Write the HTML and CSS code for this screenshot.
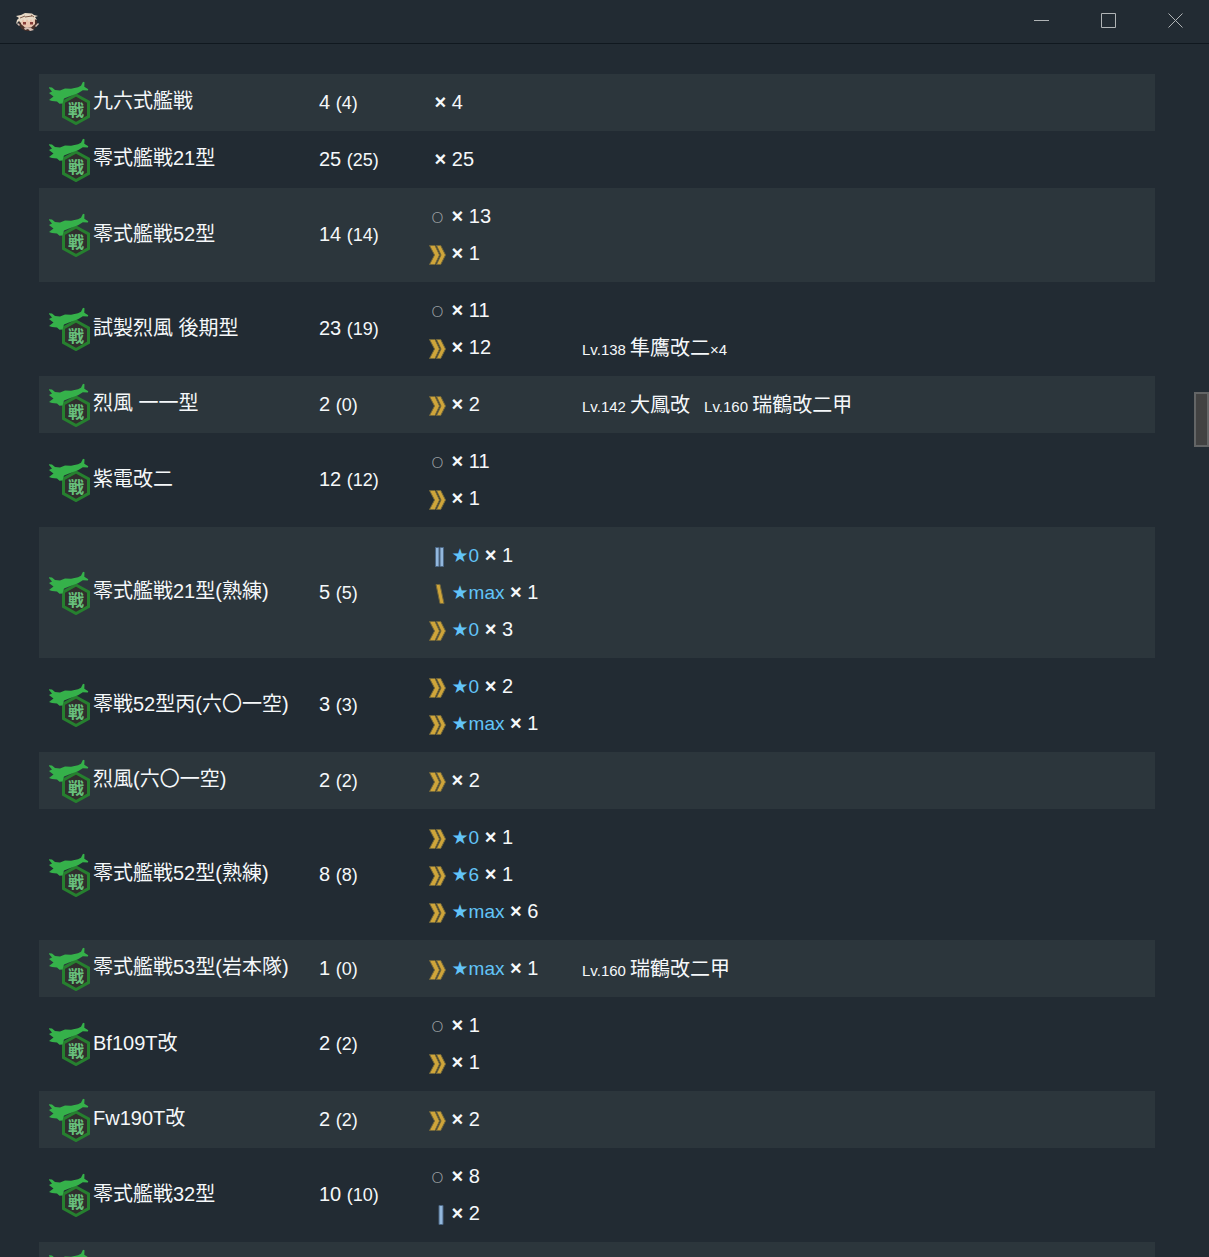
FILE: index.html
```
<!DOCTYPE html>
<html lang="ja">
<head>
    <meta charset="UTF-8">
    <meta name="viewport" content="width=device-width, initial-scale=1.0">
    <title>Equipment</title>
    <link rel="stylesheet" href="styles.css">
</head>
<body>
    <svg class="sprites" aria-hidden="true">
        <symbol id="fighter" viewBox="0 0 44 44">
            <path d="M27 14 39.500 21v14.500L27 42.500 14.500 35.500V21z" fill="#302f2d" stroke="#26802f" stroke-width="3"/>
            <text x="27" y="35" class="fighter-mark">戦</text>
            <path d="M-.7 6.300 3 6.500 6 9l5 .5 5-2 6 .3 7-1.500 3-1.500 2-4 1.500.5-.2 4.500 4 2.500-.5 1.300-5-.3-4.800 3L20 15.500l-5 2-1.500 5-3 .2L8 20.500 3 20l-3-1 4.500-3.500-2-1.500L0 12l3-1.500z" fill="#35b14a"/>
        </symbol>
        <symbol id="p7" viewBox="0 0 17 20">
            <path d="M.5.5H6l4.500 9.500L6 19.500H.5l5-9.500zM7.500.5h4.200l4.800 9.500-4.800 9.500H7.500l4.500-9.500z" class="gold"/>
        </symbol>
        <symbol id="p4" viewBox="0 0 17 20"><path d="M7 .5h4l4 19h-4z" class="gold"/></symbol>
        <symbol id="p2" viewBox="0 0 17 20"><path d="M6.500.5h3.500v19H6.500zM11 .5h3.500v19H11z" class="blue"/></symbol>
        <symbol id="p1" viewBox="0 0 17 20"><path d="M10 .5h4v19h-4z" class="blue"/></symbol>
    </svg>

    <header class="titlebar">
        <svg class="logo" viewBox="0 0 24 20" aria-hidden="true">
            <ellipse cx="12" cy="11" rx="9" ry="8" fill="#4a3029"/>
            <path d="M5 7h14v5l-4 3.500H9L5 12z" fill="#e9c3ae"/>
            <path d="M0 4l5-1 4-2 7 .5 2 1.500 4 1-3 1 2 3-3-1-1 3-2-3-2 3-2-3-2 3-2-3-2 4-2-2-3 3 1-4H1l2-2z" fill="#e8dac7"/>
            <path d="M4 6l5-2M9 5l7-1M18 5l-3-2" stroke="#7c5948" stroke-width="1" fill="none"/>
            <path d="M7 10h3v2.500H7zM14 10h3v2.500h-3z" fill="#873c38"/>
            <path d="M8 16l3-1 4 1 3 2-4 1-2-2-3 1zM19 14l3-3 1 1-3 3zM2 11l2 2-1 1-2-2z" fill="#d6bfb5"/>
        </svg>
        <div class="window-buttons">
            <button aria-label="Minimize"><svg viewBox="0 0 15 15"><path d="M0 7.500h15"/></svg></button>
            <button aria-label="Maximize"><svg viewBox="0 0 15 15"><path d="M.5.5h14v14H.5z"/></svg></button>
            <button aria-label="Close"><svg viewBox="0 0 15 15"><path d="M.5.5l14 14M14.500.5l-14 14"/></svg></button>
        </div>
    </header>

    <main class="content">
        <table class="items">
            <colgroup><col class="col-name"><col class="col-count"><col class="col-level"><col></colgroup>
            <tr>
                <td><div class="name"><svg><use href="#fighter"/></svg><span>九六式艦戦</span></div></td>
                <td class="count">4 <small>(4)</small></td>
                <td class="levels"><div>&nbsp;<b>×</b> 4</div></td>
                <td class="ships"></td>
            </tr>
            <tr>
                <td><div class="name"><svg><use href="#fighter"/></svg><span>零式艦戦21型</span></div></td>
                <td class="count">25 <small>(25)</small></td>
                <td class="levels"><div>&nbsp;<b>×</b> 25</div></td>
                <td class="ships"></td>
            </tr>
            <tr>
                <td><div class="name"><svg><use href="#fighter"/></svg><span>零式艦戦52型</span></div></td>
                <td class="count">14 <small>(14)</small></td>
                <td class="levels">
                    <div><i>O</i> <b>×</b> 13</div>
                    <div><svg><use href="#p7"/></svg> <b>×</b> 1</div>
                </td>
                <td class="ships"></td>
            </tr>
            <tr>
                <td><div class="name"><svg><use href="#fighter"/></svg><span>試製烈風 後期型</span></div></td>
                <td class="count">23 <small>(19)</small></td>
                <td class="levels">
                    <div><i>O</i> <b>×</b> 11</div>
                    <div><svg><use href="#p7"/></svg> <b>×</b> 12</div>
                </td>
                <td class="ships"><span><small>Lv.138 </small>隼鷹改二<small>×4</small></span></td>
            </tr>
            <tr>
                <td><div class="name"><svg><use href="#fighter"/></svg><span>烈風 一一型</span></div></td>
                <td class="count">2 <small>(0)</small></td>
                <td class="levels"><div><svg><use href="#p7"/></svg> <b>×</b> 2</div></td>
                <td class="ships"><span><small>Lv.142 </small>大鳳改</span><span><small>Lv.160 </small>瑞鶴改二甲</span></td>
            </tr>
            <tr>
                <td><div class="name"><svg><use href="#fighter"/></svg><span>紫電改二</span></div></td>
                <td class="count">12 <small>(12)</small></td>
                <td class="levels">
                    <div><i>O</i> <b>×</b> 11</div>
                    <div><svg><use href="#p7"/></svg> <b>×</b> 1</div>
                </td>
                <td class="ships"></td>
            </tr>
            <tr>
                <td><div class="name"><svg><use href="#fighter"/></svg><span>零式艦戦21型(熟練)</span></div></td>
                <td class="count">5 <small>(5)</small></td>
                <td class="levels">
                    <div><svg><use href="#p2"/></svg> <em>★0</em> <b>×</b> 1</div>
                    <div><svg><use href="#p4"/></svg> <em>★max</em> <b>×</b> 1</div>
                    <div><svg><use href="#p7"/></svg> <em>★0</em> <b>×</b> 3</div>
                </td>
                <td class="ships"></td>
            </tr>
            <tr>
                <td><div class="name"><svg><use href="#fighter"/></svg><span>零戦52型丙(六〇一空)</span></div></td>
                <td class="count">3 <small>(3)</small></td>
                <td class="levels">
                    <div><svg><use href="#p7"/></svg> <em>★0</em> <b>×</b> 2</div>
                    <div><svg><use href="#p7"/></svg> <em>★max</em> <b>×</b> 1</div>
                </td>
                <td class="ships"></td>
            </tr>
            <tr>
                <td><div class="name"><svg><use href="#fighter"/></svg><span>烈風(六〇一空)</span></div></td>
                <td class="count">2 <small>(2)</small></td>
                <td class="levels"><div><svg><use href="#p7"/></svg> <b>×</b> 2</div></td>
                <td class="ships"></td>
            </tr>
            <tr>
                <td><div class="name"><svg><use href="#fighter"/></svg><span>零式艦戦52型(熟練)</span></div></td>
                <td class="count">8 <small>(8)</small></td>
                <td class="levels">
                    <div><svg><use href="#p7"/></svg> <em>★0</em> <b>×</b> 1</div>
                    <div><svg><use href="#p7"/></svg> <em>★6</em> <b>×</b> 1</div>
                    <div><svg><use href="#p7"/></svg> <em>★max</em> <b>×</b> 6</div>
                </td>
                <td class="ships"></td>
            </tr>
            <tr>
                <td><div class="name"><svg><use href="#fighter"/></svg><span>零式艦戦53型(岩本隊)</span></div></td>
                <td class="count">1 <small>(0)</small></td>
                <td class="levels"><div><svg><use href="#p7"/></svg> <em>★max</em> <b>×</b> 1</div></td>
                <td class="ships"><span><small>Lv.160 </small>瑞鶴改二甲</span></td>
            </tr>
            <tr>
                <td><div class="name"><svg><use href="#fighter"/></svg><span>Bf109T改</span></div></td>
                <td class="count">2 <small>(2)</small></td>
                <td class="levels">
                    <div><i>O</i> <b>×</b> 1</div>
                    <div><svg><use href="#p7"/></svg> <b>×</b> 1</div>
                </td>
                <td class="ships"></td>
            </tr>
            <tr>
                <td><div class="name"><svg><use href="#fighter"/></svg><span>Fw190T改</span></div></td>
                <td class="count">2 <small>(2)</small></td>
                <td class="levels"><div><svg><use href="#p7"/></svg> <b>×</b> 2</div></td>
                <td class="ships"></td>
            </tr>
            <tr>
                <td><div class="name"><svg><use href="#fighter"/></svg><span>零式艦戦32型</span></div></td>
                <td class="count">10 <small>(10)</small></td>
                <td class="levels">
                    <div><i>O</i> <b>×</b> 8</div>
                    <div><svg><use href="#p1"/></svg> <b>×</b> 2</div>
                </td>
                <td class="ships"></td>
            </tr>
            <tr>
                <td><div class="name"><svg><use href="#fighter"/></svg></div></td>
                <td class="count"></td>
                <td class="levels"></td>
                <td class="ships"></td>
            </tr>
        </table>
        <div class="scroll-thumb"></div>
    </main>
</body>
</html>
```
FILE: styles.css
```
* { margin: 0; padding: 0; box-sizing: border-box; }
body {
    height: 100vh;
    display: flex;
    flex-direction: column;
    overflow: hidden;
    background: #222b33;
    color: #f5f8fa;
    font-family: "Liberation Sans", Arial, "Noto Sans CJK JP", sans-serif;
    font-size: 20px;
}
.sprites { display: none; }
.gold { fill: #cfa53a; stroke: #74683a; stroke-width: 1; }
.blue { fill: #93b8dd; stroke: #4c6784; stroke-width: 1; }
.fighter-mark { font-family: "Noto Sans CJK JP", sans-serif; font-size: 16px; font-weight: 700; text-anchor: middle; fill: #68c07c; }

.titlebar {
    flex: none;
    display: flex;
    align-items: center;
    justify-content: space-between;
    height: 44px;
    padding-left: 16px;
    border-bottom: 1px solid #10181f;
}
.logo { width: 24px; height: 20px; }
.window-buttons { display: flex; }
.window-buttons button { width: 67px; height: 41px; background: none; border: none; cursor: pointer; }
.window-buttons button:hover { background: #394b59; }
.window-buttons svg { display: block; width: 15px; height: 15px; margin: 0 auto; fill: none; stroke: #b0b4b6; stroke-width: 1; }
.titlebar .window-buttons { align-self: flex-start; }

.content { position: relative; flex: 1; min-height: 0; overflow: hidden; padding: 30px 54px 0 39px; }
.items { width: 100%; table-layout: fixed; border-collapse: collapse; }
.items tr { height: 57px; }
.items tr:nth-child(odd) { background: #2c363c; }
.items td { vertical-align: middle; white-space: nowrap; line-height: 37px; }
.col-name { width: 280px; }
.col-count { width: 110px; }
.col-level { width: 153px; }

.name { display: flex; align-items: center; padding-left: 10px; }
.name svg { flex: none; width: 44px; height: 44px; overflow: visible; }
.name span { padding-bottom: 2px; }
.count small { font-size: 18px; }
.items .levels { padding: 10px 0; }
.levels div { height: 37px; }
.levels svg { width: 17px; height: 20px; vertical-align: middle; }
.levels i { display: inline-block; width: 17px; font: 300 15px Lato, sans-serif; color: #a3a8ab; text-align: center; }
.levels em { font-style: normal; font-size: 19px; color: #62c4f8; font-family: "Liberation Sans", Arial, "DejaVu Sans", sans-serif; }
.items .ships { padding-bottom: 8px; vertical-align: bottom; }
.ships span { margin-right: 14px; }
.ships small { font-size: 15px; }

.scroll-thumb { position: absolute; top: 348px; right: 0; width: 15px; height: 55px; background: #424242; border: 2px solid #636566; }
```
